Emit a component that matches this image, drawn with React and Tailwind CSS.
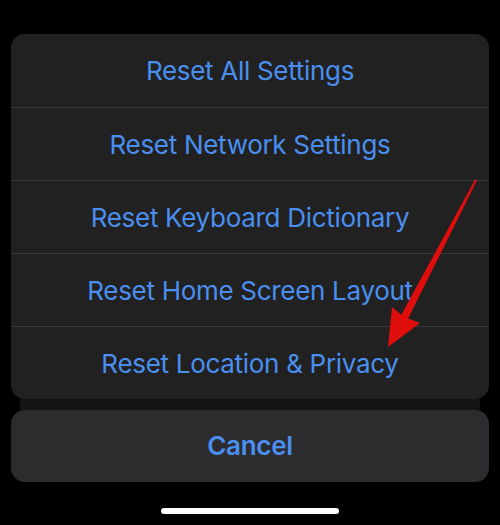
import React from 'react'

const ITEMS = [
  'Reset All Settings',
  'Reset Network Settings',
  'Reset Keyboard Dictionary',
  'Reset Home Screen Layout',
  'Reset Location & Privacy',
]

export default function App() {
  return (
    <div
      className="relative w-[500px] h-[525px] bg-black overflow-hidden"
      style={{ fontFamily: 'Inter, "Noto Sans", sans-serif' }}
    >
      <div className="pt-[34px] px-[11px]">
        <div className="rounded-[14px] bg-[#212121] overflow-hidden">
          {ITEMS.map((label, i) => (
            <div
              key={label}
              className={
                'h-[73px] flex items-center justify-center text-[26px] text-[#4a8ff0] tracking-[-0.3px] ' +
                (i > 0 ? 'border-t border-[#3a3a3c]' : '')
              }
            >
              {label}
            </div>
          ))}
        </div>
        <div className="mx-[9px] h-[11px] bg-[#141414]" />
        <div className="h-[72px] rounded-[14px] bg-[#2c2c2e] flex items-center justify-center text-[26px] font-semibold text-[#4a8ff0] tracking-[-0.3px] pb-[1px]">
          Cancel
        </div>
      </div>

      <div className="absolute left-[161px] top-[508px] w-[178px] h-[6px] rounded-full bg-white" />

      <svg className="absolute left-0 top-0" width="500" height="525" viewBox="0 0 500 525">
        <path d="M476.9 180.5 L407.5 319.8 L400.5 316.2 L475.1 179.5 Z" fill="#e00d0d" />
        <path d="M388 347 L392 307 L404 317 L420 323 Z" fill="#e00d0d" />
      </svg>
    </div>
  )
}
